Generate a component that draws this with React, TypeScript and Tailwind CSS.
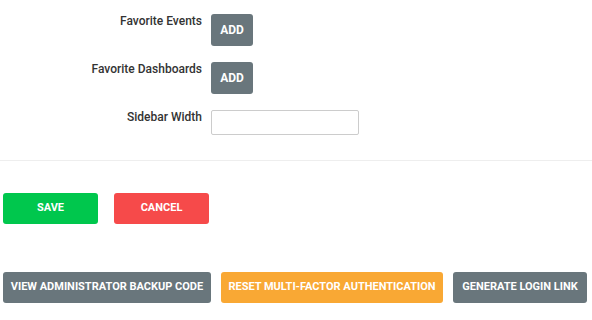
import React from 'react';

const btn =
  'flex items-center justify-center rounded-[3px] text-[11px] font-bold uppercase text-white h-[31px]';

function Row({ label, children }: { label: string; children: React.ReactNode }) {
  return (
    <>
      <div className="-mt-[1px] text-right text-[12px] font-medium leading-4 text-[#333]">{label}</div>
      <div>{children}</div>
    </>
  );
}

export default function App() {
  return (
    <div className="min-h-screen w-[592px] bg-white" style={{ fontFamily: 'Roboto, "Liberation Sans", sans-serif' }}>
      <div className="grid grid-cols-[202px_auto] gap-x-[9px] gap-y-[16px] pt-[14px]">
        <Row label="Favorite Events">
          <button className={`${btn} h-[32px] w-[42px] bg-[#69767c] text-[12px]`}>Add</button>
        </Row>
        <Row label="Favorite Dashboards">
          <button className={`${btn} h-[32px] w-[42px] bg-[#69767c] text-[12px]`}>Add</button>
        </Row>
        <Row label="Sidebar Width">
          <input className="block h-[25px] w-[148px] rounded-[2px] border border-[#ccc] bg-white" />
        </Row>
      </div>

      <div className="mt-[25px] border-t border-[#eee]" />

      <div className="mt-[32px] flex gap-[16px] pl-[3px]">
        <button className={`${btn} w-[95px] bg-[#00c74d]`}>Save</button>
        <button className={`${btn} w-[95px] bg-[#f64a4a]`}>Cancel</button>
      </div>

      <div className="mt-[48px] flex gap-[10px] pl-[3px]">
        <button className={`${btn} w-[208px] bg-[#69767c]`}>View Administrator Backup Code</button>
        <button className={`${btn} w-[222px] bg-[#f9a834]`}>Reset Multi-Factor Authentication</button>
        <button className={`${btn} w-[134px] bg-[#69767c]`}>Generate Login Link</button>
      </div>
    </div>
  );
}
